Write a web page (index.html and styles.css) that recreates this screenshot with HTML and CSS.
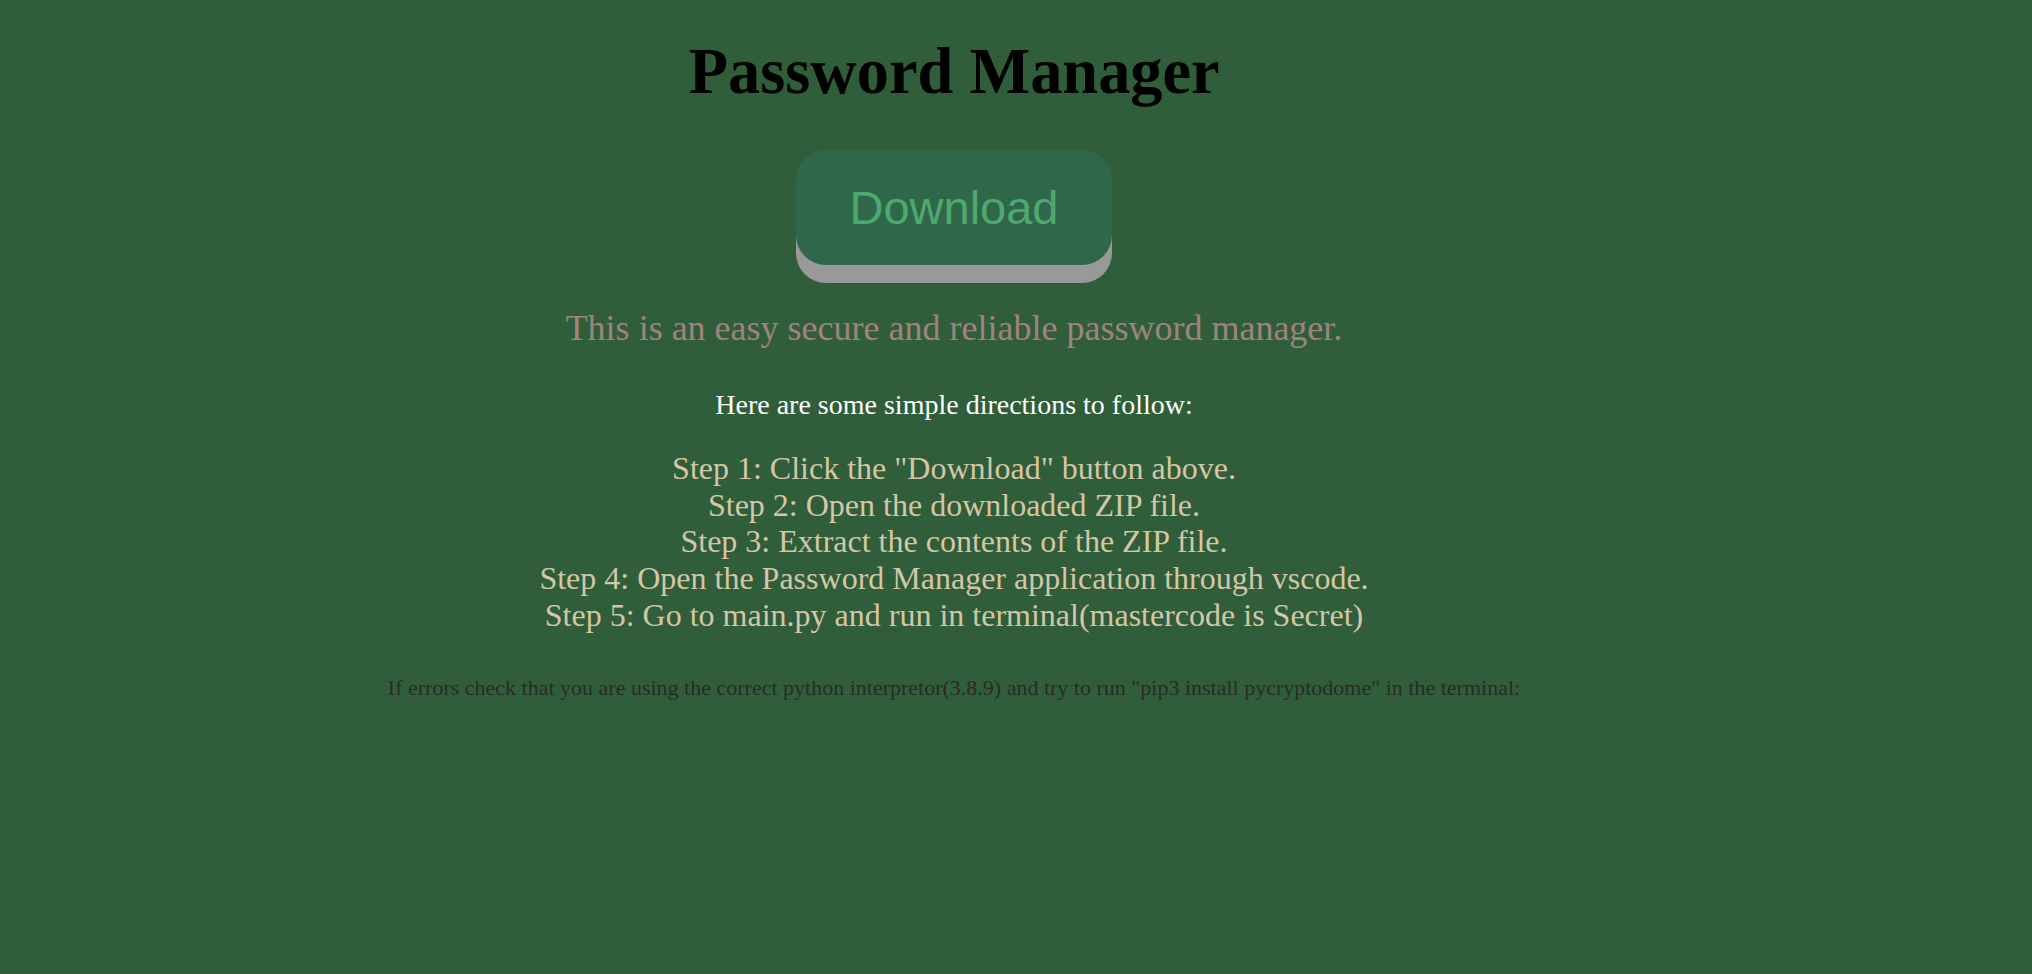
FILE: index.html
```html
<!DOCTYPE html>
<html lang="en">
<head>
<meta charset="utf-8">
<title>Password Manager</title>
<link rel="stylesheet" href="styles.css">
</head>
<body>
<main class="page">
  <h1 class="title"><span class="title-text">Password Manager</span></h1>
  <div class="download-wrap">
    <button class="download" type="button">Download</button>
  </div>
  <p class="tagline">This is an easy secure and reliable password manager.</p>
  <p class="intro">Here are some simple directions to follow:</p>
  <p class="steps">
    Step 1: Click the "Download" button above.<br>
    Step 2: Open the downloaded ZIP file.<br>
    Step 3: Extract the contents of the ZIP file.<br>
    Step 4: Open the Password Manager application through vscode.<br>
    Step 5: Go to main.py and run in terminal(mastercode is Secret)
  </p>
  <p class="note">If errors check that you are using the correct python interpretor(3.8.9) and try to run "pip3 install pycryptodome" in the terminal:</p>
</main>
</body>
</html>
```
FILE: styles.css
```css
html, body {
  margin: 0;
  padding: 0;
  background: #305e3a;
}
body {
  font-family: "Liberation Serif", "Times New Roman", serif;
  min-height: 974px;
}
.page {
  width: 1908px;
  display: flex;
  flex-direction: column;
  align-items: center;
  text-align: center;
}
.title {
  margin: 33px 0 0;
  font-size: 66px;
  line-height: 76px;
  font-weight: bold;
  color: #000;
}
.title-text {
  display: inline-block;
  transform: scaleX(0.975);
}
.download-wrap {
  margin-top: 41px;
}
.download {
  font-family: "Liberation Sans", Arial, sans-serif;
  font-size: 47px;
  line-height: 55px;
  padding: 30px 53px;
  border: none;
  border-radius: 30px;
  background: #2f674b;
  color: #4fa86d;
  box-shadow: 0 18px 0 #999999;
  cursor: pointer;
}
.tagline {
  margin: 43px 0 0;
  font-size: 36px;
  line-height: 41px;
  color: #a08380;
}
.intro {
  margin: 40px 0 0;
  font-size: 28px;
  line-height: 32px;
  color: #ffffff;
}
.steps {
  margin: 29px 0 0;
  font-size: 32px;
  line-height: 36.7px;
  color: #d4c6a6;
}
.note {
  margin: 41px 0 0;
  font-size: 22px;
  line-height: 25px;
  color: #2a2a2a;
}
```
